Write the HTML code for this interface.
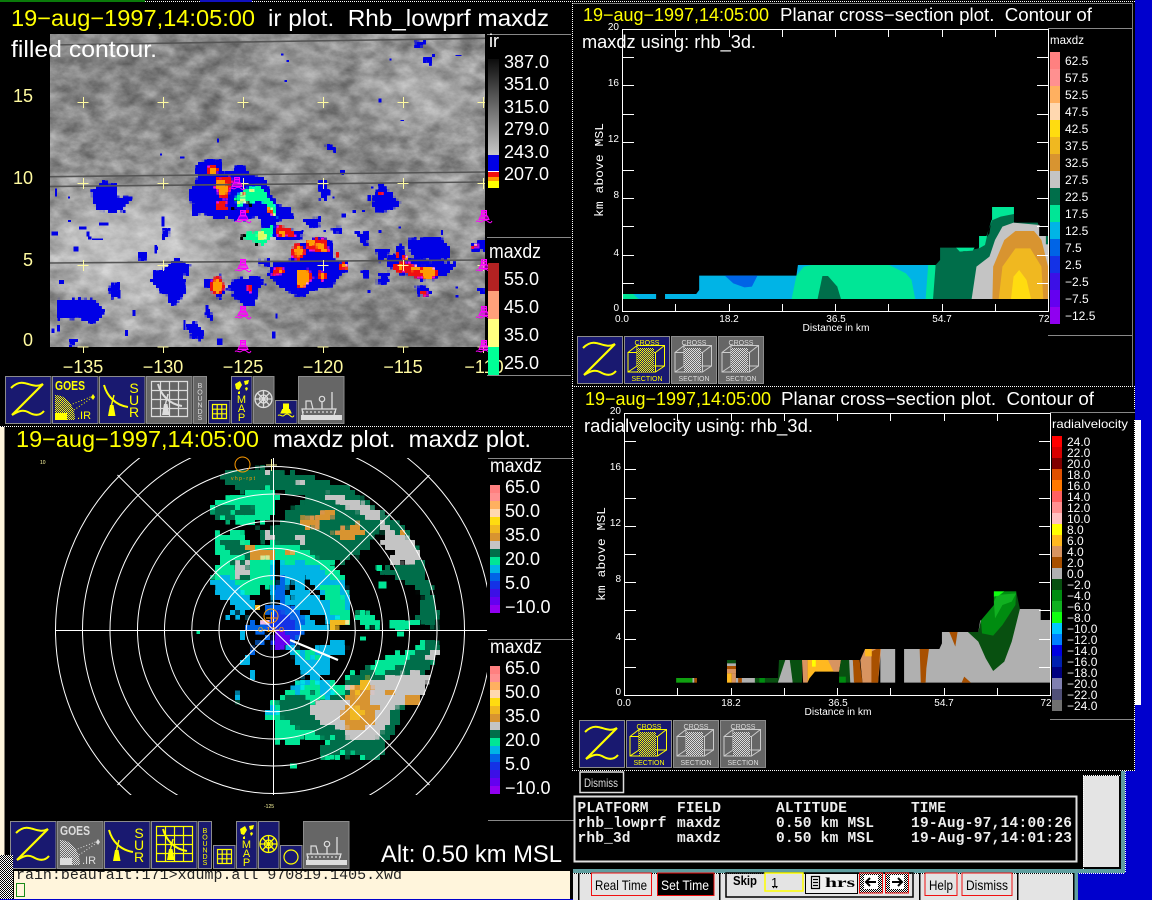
<!DOCTYPE html>
<html><head><meta charset="utf-8"><title>Radar display</title>
<style>
html,body{margin:0;padding:0;background:#000;width:1152px;height:900px;overflow:hidden}
svg{display:block;position:absolute;left:0;top:0}
text{font-family:"Liberation Sans",sans-serif}
.w{fill:#fff}.y{fill:#ffff00}.p{fill:#fffaa0}
.m,.m text{font-family:"Liberation Mono",monospace}
.dot{fill:none;stroke:#fff;stroke-width:1;stroke-dasharray:1 1;shape-rendering:crispEdges}
</style></head><body>
<svg width="1152" height="900" viewBox="0 0 1152 900" xmlns="http://www.w3.org/2000/svg">
<defs>
<pattern id="dy" width="2" height="2" patternUnits="userSpaceOnUse"><rect width="2" height="2" fill="#191970"/><rect width="1" height="1" fill="#ff0"/><rect x="1" y="1" width="1" height="1" fill="#ff0"/></pattern>
<pattern id="dw" width="2" height="2" patternUnits="userSpaceOnUse"><rect width="2" height="2" fill="#666"/><rect width="1" height="1" fill="#ddd"/><rect x="1" y="1" width="1" height="1" fill="#ddd"/></pattern>
<pattern id="dk" width="2" height="2" patternUnits="userSpaceOnUse"><rect width="2" height="2" fill="#fff"/><rect width="1" height="1" fill="#000"/><rect x="1" y="1" width="1" height="1" fill="#000"/></pattern>
<filter id="cloud" filterUnits="userSpaceOnUse" x="50" y="34" width="435" height="313" color-interpolation-filters="sRGB">
<feTurbulence type="fractalNoise" baseFrequency="0.05 0.075" numOctaves="5" seed="7"/>
<feColorMatrix values="0.5 0 0 0 0.31  0.5 0 0 0 0.31  0.5 0 0 0 0.31  0 0 0 0 1"/>
</filter>
<filter id="bl" filterUnits="userSpaceOnUse" x="0" y="0" width="1152" height="900"><feGaussianBlur stdDeviation="16"/></filter>
<filter id="rgh" filterUnits="userSpaceOnUse" x="0" y="0" width="600" height="420" color-interpolation-filters="sRGB">
<feTurbulence type="fractalNoise" baseFrequency="0.14" numOctaves="2" seed="3" result="n"/>
<feDisplacementMap in="SourceGraphic" in2="n" scale="8" xChannelSelector="R" yChannelSelector="G"/>
</filter>
<filter id="rgs" filterUnits="userSpaceOnUse" x="0" y="0" width="600" height="420" color-interpolation-filters="sRGB">
<feTurbulence type="fractalNoise" baseFrequency="0.2" numOctaves="2" seed="11" result="n"/>
<feDisplacementMap in="SourceGraphic" in2="n" scale="4" xChannelSelector="R" yChannelSelector="G"/>
</filter>
<filter id="rp" filterUnits="userSpaceOnUse" x="0" y="420" width="600" height="400" color-interpolation-filters="sRGB">
<feTurbulence type="fractalNoise" baseFrequency="0.11" numOctaves="2" seed="5" result="n"/>
<feDisplacementMap in="SourceGraphic" in2="n" scale="10" xChannelSelector="R" yChannelSelector="G"/>
</filter>
<filter id="px5" filterUnits="userSpaceOnUse" primitiveUnits="userSpaceOnUse" x="0" y="420" width="600" height="400" color-interpolation-filters="sRGB">
<feFlood x="2" y="422" width="1" height="1" flood-color="#000"/>
<feComposite width="5" height="5"/>
<feTile result="a"/>
<feComposite in="SourceGraphic" in2="a" operator="in"/>
<feMorphology operator="dilate" radius="2"/>
</filter>
<filter id="px3" filterUnits="userSpaceOnUse" primitiveUnits="userSpaceOnUse" x="0" y="0" width="600" height="420" color-interpolation-filters="sRGB">
<feFlood x="1" y="1" width="1" height="1" flood-color="#000"/>
<feComposite width="3" height="3"/>
<feTile result="a"/>
<feComposite in="SourceGraphic" in2="a" operator="in"/>
<feMorphology operator="dilate" radius="1"/>
</filter>
<clipPath id="mapc"><rect x="50" y="34" width="435" height="313"/></clipPath>
<clipPath id="polc"><rect x="55" y="458" width="432" height="337"/></clipPath>
<clipPath id="termc"><rect x="14" y="871" width="556" height="28"/></clipPath>
<g id="zz" fill="none" stroke="#ff0" stroke-width="2"><path d="M6 12C10 8 14 6 19 7C25 8 31 12 38 8"/><path d="M38 8L7 39" stroke-width="2.200"/><path d="M7 39C12 36 17 33 23 36C28 39 34 41 39 35"/></g>
<g id="dish" fill="none" stroke="currentColor"><path d="M5 9C8 20 16 29 29 31" stroke-width="2"/><path d="M15 19L12.500 29" stroke-width="1.500"/><path d="M11 29H14.500L16.500 40H9Z" fill="currentColor" stroke="none"/></g>
<g id="grid4" fill="none" stroke="currentColor" stroke-width="1"><path d="M5.500 5.500H41.500V40.500H5.500ZM14.500 5.500V40.500M23.500 5.500V40.500M32.500 5.500V40.500M5.500 14.500H41.500M5.500 23.500H41.500M5.500 32.500H41.500" stroke-width="1.200"/></g>
<g id="sg" fill="none" stroke="currentColor" stroke-width="1.200"><path d="M4.500 6.500H18.500V20.500H4.500ZM9.200 6.500V20.500M13.800 6.500V20.500M4.500 11.200H18.500M4.500 15.800H18.500"/></g>
<g id="wheel" fill="none" stroke="currentColor" stroke-width="1.300"><circle cx="10.500" cy="23" r="8.500"/><circle cx="10.500" cy="23" r="4"/><path d="M10.500 14.500V31.500M2 23H19M4.500 17L16.500 29M16.500 17L4.500 29"/></g>
<g id="ship" fill="none" stroke="#ddd" stroke-width="1.200"><rect x="3" y="39" width="41" height="5" fill="#ddd" stroke="none"/><path d="M5 39L4 33L38 33L36 39"/><path d="M4 36H38" stroke-dasharray="2 2"/><path d="M8 33V25H13L15 33"/><circle cx="24" cy="23" r="2.700"/><path d="M24 26V33M34 16V33" stroke-width="1.300"/></g>
<g id="mapi" fill="#ff0"><path d="M4 8L9 5L11 9L8 14L5 13ZM13 5L18 4L17 8L14 9ZM14 12L16 11L17 13L15 15ZM7 16L9 15L9 18L7 18Z"/></g>
<g id="cube" fill="none" stroke="currentColor" stroke-width="1"><path d="M4 16.500H31.500V36H4ZM13 9.500H40.500V30H13ZM4 16.500L13 9.500M31.500 16.500L40.500 9.500M31.500 36L40.500 30M4 36L13 30"/></g>
<g id="buoy" fill="none" stroke="#ff00ff" stroke-width="1"><path d="M-2.500 -8.500H2.500V-3.500H-2.500ZM-2.500 -6.500H2.500M-3.500 -3L3.500 -3L5 0.500H-5Z" fill="#ff00ff" fill-opacity=".55"/><path d="M-8 2.500C-6 0.500 -4 4 -2 2.500S2 0.500 4 2.500S7 4 8 2"/></g>
<g id="tf" stroke="#fff" stroke-width="1" fill="none" shape-rendering="crispEdges">
<path d="M622.500 29.500H1048.500V311.500H622.500Z"/>
<path d="M622 57.500H634M622 85.500H634M622 114.500H634M622 142.500H634M622 170.500H634M622 198.500H634M622 226.500H634M622 255.500H634M622 283.500H634"/>
<path d="M1037 57.500H1048M1037 85.500H1048M1037 114.500H1048M1037 142.500H1048M1037 170.500H1048M1037 198.500H1048M1037 226.500H1048M1037 255.500H1048M1037 283.500H1048"/>
<path d="M675.500 29V37M729.500 29V37M782.500 29V37M835.500 29V37M888.500 29V37M942.500 29V37M995.500 29V37"/>
<path d="M675.500 304V312M729.500 304V312M782.500 304V312M835.500 304V312M888.500 304V312M942.500 304V312M995.500 304V312"/>
</g>
</defs>

<!-- desktop -->
<rect width="1152" height="900" fill="#000"/>
<rect x="1135" y="0" width="17" height="775" fill="#0000cd"/>
<rect x="1125" y="771" width="27" height="102" fill="#0000cd"/>
<rect x="1078" y="873" width="74" height="27" fill="#0000cd"/>
<rect x="1135" y="420" width="6" height="285" fill="#fff"/>

<!-- top edge colours -->
<rect x="0" y="0" width="145" height="2" fill="#0a7a0a"/>
<rect x="200" y="0" width="52" height="2" fill="#1010c0"/>
<path class="dot" d="M145 1.500H200M252 1.500H1135M0 426.500H572"/>

<!-- left cream strip -->
<rect x="0" y="427" width="4.500" height="428" fill="#fff5dc"/>

<!-- ============ IR map ============ -->
<g clip-path="url(#mapc)">
<rect x="50" y="34" width="435" height="313" filter="url(#cloud)"/>
<g filter="url(#bl)">
<rect x="50" y="34" width="300" height="90" fill="#000" opacity=".08"/>
<ellipse cx="130" cy="250" rx="85" ry="55" fill="#fff" opacity=".42"/>
<ellipse cx="170" cy="330" rx="120" ry="22" fill="#fff" opacity=".18"/>
<ellipse cx="290" cy="75" rx="25" ry="45" fill="#fff" opacity=".2"/>
<ellipse cx="420" cy="90" rx="60" ry="40" fill="#fff" opacity=".22"/>
<ellipse cx="300" cy="245" rx="70" ry="25" fill="#fff" opacity=".28"/>
<ellipse cx="400" cy="330" rx="100" ry="25" fill="#000" opacity=".12"/>
<ellipse cx="360" cy="140" rx="45" ry="35" fill="#000" opacity=".08"/>
<ellipse cx="450" cy="210" rx="30" ry="20" fill="#fff" opacity=".28"/>
</g>
<g filter="url(#px3)">
<g filter="url(#rgh)"><g transform="scale(.36738 .33333)" fill="#0000e6">
<path d="M530 490L600 475L610 520L660 490L680 525L720 530L725 560L750 610L790 625L800 655L760 660L740 680L800 690L830 700L810 720L750 720L700 650L650 660L590 655L550 640L520 650L525 610L510 580L535 550Z"/>
<path d="M250 570L280 545L320 555L325 590L360 590L340 630L310 640L260 630L250 600Z"/>
<path d="M1015 600L1030 550L1050 560L1075 590L1090 610L1050 640L1010 630Z"/>
<path d="M1110 720L1190 710L1225 740L1225 775L1130 780L1110 750Z"/>
<path d="M1060 770L1090 735L1110 775L1240 790L1220 830L1150 840L1090 820L1060 800Z"/>
<path d="M1030 820L1055 815L1055 850L1030 850Z"/>
<path d="M800 740L850 715L900 720L905 780L950 790L950 810L930 830L900 860L810 890L760 860L725 820L745 790L790 775Z"/>
<path d="M420 820L480 780L520 795L500 830L505 880L470 915L440 880L415 840Z"/>
<path d="M565 840L600 830L610 875L600 900L570 870L555 855Z"/>
<path d="M630 840L700 825L715 840L690 915L650 905L622 870Z"/>
<path d="M155 900L260 895L285 940L250 975L210 950L160 960L150 930Z"/>
<path d="M505 970L535 965L555 1000L550 1020L520 1010Z"/>
<path d="M815 655L870 655L875 675L840 680Z"/>
<path d="M970 700L1005 695L1005 735L985 735Z"/>
<path d="M1280 730L1320 712L1320 755L1290 755Z"/>
<path d="M1130 125L1160 118L1150 145L1130 145Z"/>
<path d="M1155 175L1185 160L1175 190L1155 190Z"/>
<path d="M885 440L910 435L915 458L900 455Z"/>
<path d="M1130 860L1170 860L1170 890L1140 890Z"/>
<path d="M190 1020L210 1020L205 1040L190 1040Z"/>
<path d="M1020 750L1060 745L1060 770L1030 780Z"/>
<path d="M700 775L740 775L735 800L705 795Z"/>
<path d="M380 760L400 760L395 785L380 785Z"/>
<path d="M905 685L935 685L935 700L910 700Z"/>
<path d="M985 810L1005 805L1005 830L990 830Z"/>
<path d="M1300 860L1320 860L1320 880L1305 880Z"/>
<path d="M300 850L325 845L325 895L305 895Z"/>
<path d="M440 690L460 690L458 720L445 720Z"/>
<path d="M565 925L585 955L575 965L560 940Z"/>
<path d="M870 540L890 540L890 600L870 600Z"/>
</g></g>
<g filter="url(#rgs)"><g transform="translate(180 150) scale(.33333)">
<g fill="#f01010">
<ellipse cx="98" cy="60" rx="20" ry="15"/><path d="M105 85L155 78L155 110L140 150L115 140L105 110Z"/><rect x="108" y="155" width="32" height="25"/>
<ellipse cx="355" cy="305" rx="20" ry="24"/><path d="M380 275L395 265L440 265L445 305L400 305L378 298Z"/><path d="M350 365L385 355L400 385L375 410L350 415Z"/>
<ellipse cx="425" cy="377" rx="16" ry="13"/><ellipse cx="112" cy="408" rx="21" ry="27"/><path d="M275 360L310 348L315 372L275 375Z"/>
<rect x="202" y="405" width="15" height="22"/><path d="M290 225L345 240L345 258L295 262Z"/><path d="M475 340L490 335L508 355L480 358Z"/><ellipse cx="471" cy="316" rx="7" ry="7"/>
<path d="M640 345L670 330L700 345L690 365L645 365Z"/><path d="M685 358L730 345L775 360L775 380L735 388L685 375Z"/><path d="M648 305L660 305L660 320L648 320Z"/><path d="M668 320L685 316L685 330L668 330Z"/><path d="M720 420L745 425L745 440L725 437Z"/><path d="M878 285L895 282L895 295L880 295Z"/><rect x="597" y="125" width="10" height="10"/>
<path d="M260 165L285 170L290 205L265 190Z"/>
</g>
<g fill="#ff9c00">
<rect x="92" y="55" width="16" height="16"/><path d="M110 90L135 90L143 120L132 140L112 125Z"/><ellipse cx="355" cy="304" rx="12" ry="15"/><ellipse cx="394" cy="278" rx="9" ry="9"/><path d="M408 282L430 282L438 305L415 298Z"/><ellipse cx="369" cy="385" rx="19" ry="24"/><ellipse cx="427" cy="377" rx="8" ry="7"/><ellipse cx="112" cy="408" rx="15" ry="19"/><rect x="300" y="240" width="14" height="20"/><rect x="295" y="358" width="10" height="10"/><ellipse cx="705" cy="355" rx="11" ry="9"/><ellipse cx="745" cy="367" rx="20" ry="18"/><rect x="655" y="345" width="12" height="12"/><rect x="672" y="318" width="12" height="10"/><rect x="488" y="345" width="12" height="8"/><rect x="262" y="170" width="20" height="14"/><rect x="277" y="182" width="12" height="18"/><rect x="883" y="284" width="10" height="8"/>
</g>
<g fill="#00ff96">
<path d="M190 115L240 110L265 135L290 180L290 205L275 180L245 155L200 155L178 170L160 150Z"/>
<path d="M195 268L200 250L245 240L285 225L270 262L250 285L220 272Z"/>
</g>
<g fill="#d8ff60"><ellipse cx="245" cy="258" rx="13" ry="12"/><rect x="170" y="150" width="32" height="10"/><rect x="210" y="120" width="12" height="6"/></g>
<g fill="#000"><rect x="152" y="172" width="14" height="10"/><rect x="185" y="255" width="12" height="10"/><rect x="222" y="280" width="10" height="8"/><rect x="165" y="148" width="12" height="8"/><rect x="202" y="155" width="12" height="14"/></g>
<g fill="#f01010"><rect x="182" y="125" width="12" height="14"/><rect x="193" y="178" width="10" height="12"/></g>
</g></g>
</g>
<g transform="scale(.36738 .33333)" fill="#0000e6" shape-rendering="crispEdges">
<rect x="185" y="660" width="8" height="6"/><rect x="270" y="668" width="25" height="9"/><rect x="140" y="695" width="18" height="12"/><rect x="200" y="740" width="14" height="14"/><rect x="240" y="710" width="9" height="9"/><rect x="160" y="840" width="14" height="12"/><rect x="340" y="990" width="9" height="18"/><rect x="360" y="930" width="9" height="18"/><rect x="1030" y="295" width="8" height="12"/><rect x="765" y="160" width="7" height="7"/><rect x="1060" y="175" width="6" height="6"/><rect x="1090" y="360" width="10" height="3"/><rect x="590" y="415" width="6" height="12"/><rect x="435" y="460" width="6" height="6"/><rect x="490" y="470" width="12" height="6"/><rect x="1000" y="870" width="9" height="9"/><rect x="1240" y="885" width="8" height="8"/><rect x="960" y="630" width="9" height="9"/><rect x="1200" y="690" width="6" height="15"/><rect x="1030" y="690" width="9" height="9"/><rect x="1240" y="165" width="16" height="3"/><rect x="775" y="240" width="6" height="6"/><rect x="420" y="740" width="10" height="10"/><rect x="240" y="940" width="6" height="30"/><rect x="720" y="850" width="6" height="6"/><rect x="925" y="510" width="14" height="10"/><rect x="930" y="640" width="12" height="12"/><rect x="905" y="590" width="6" height="6"/><rect x="780" y="180" width="6" height="6"/>
<rect x="150" y="565" width="5" height="25"/><rect x="215" y="680" width="20" height="8"/><rect x="235" y="695" width="8" height="15"/><rect x="250" y="715" width="30" height="5"/><rect x="440" y="650" width="8" height="30"/><rect x="420" y="735" width="8" height="25"/><rect x="335" y="590" width="25" height="8"/><rect x="185" y="590" width="6" height="6"/><rect x="320" y="870" width="8" height="25"/><rect x="560" y="915" width="8" height="25"/><rect x="500" y="960" width="5" height="30"/><rect x="590" y="1015" width="15" height="20"/><rect x="740" y="995" width="10" height="20"/><rect x="750" y="940" width="6" height="15"/><rect x="155" y="975" width="8" height="20"/><rect x="140" y="985" width="8" height="14"/><rect x="1050" y="830" width="6" height="8"/><rect x="1240" y="860" width="6" height="6"/><rect x="1010" y="560" width="6" height="6"/><rect x="1000" y="585" width="10" height="18"/><rect x="890" y="570" width="10" height="16"/><rect x="985" y="630" width="8" height="6"/><rect x="1085" y="680" width="6" height="6"/><rect x="930" y="515" width="6" height="10"/><rect x="820" y="690" width="6" height="6"/><rect x="880" y="690" width="8" height="6"/><rect x="910" y="880" width="0" height="0"/><rect x="1070" y="760" width="6" height="14"/><rect x="1320" y="770" width="6" height="6"/>
</g>
<path d="M50 45L485 38.300M50 176.700L485 172M50 186.500L485 182M50 263L485 260" stroke="#555" stroke-width="1.600" fill="none"/>
<g stroke="#fffaa0" stroke-width="1" fill="none" shape-rendering="crispEdges">
<path d="M77.500 102.500H88.500M83.500 97V108M157.500 102.500H168.500M163.500 97V108M237.500 102.500H248.500M243.500 97V108M317.500 102.500H328.500M323.500 97V108M397.500 102.500H408.500M403.500 97V108M477.500 102.500H488.500M483.500 97V108"/>
<path d="M77.500 183.500H88.500M83.500 178V189M157.500 183.500H168.500M163.500 178V189M237.500 183.500H248.500M243.500 178V189M317.500 183.500H328.500M323.500 178V189M397.500 183.500H408.500M403.500 178V189M477.500 183.500H488.500M483.500 178V189"/>
<path d="M77.500 265.500H88.500M83.500 260V271M157.500 265.500H168.500M163.500 260V271M317.500 265.500H328.500M323.500 260V271M397.500 265.500H408.500M403.500 260V271M477.500 265.500H488.500M483.500 260V271"/>
</g>
</g>
<g stroke="#fffaa0" stroke-width="1" fill="none" shape-rendering="crispEdges"><path d="M77.500 347H88.500M83.500 347V353M157.500 347H168.500M163.500 347V353M317.500 347H328.500M323.500 347V353M397.500 347H408.500M403.500 347V353M477.500 347H488.500M483.500 347V353"/></g>
<use href="#buoy" x="237" y="186"/><use href="#buoy" x="243" y="219"/><use href="#buoy" x="243" y="268"/><use href="#buoy" x="243" y="315"/><use href="#buoy" x="243" y="349"/><use href="#buoy" x="484" y="219"/><use href="#buoy" x="484" y="268"/><use href="#buoy" x="484" y="315"/><use href="#buoy" x="484" y="349"/>

<!-- IR labels -->
<text x="11" y="26" font-size="23" class="y" textLength="244" lengthAdjust="spacingAndGlyphs">19−aug−1997,14:05:00</text>
<text x="268" y="26" font-size="23" class="w" textLength="281" lengthAdjust="spacingAndGlyphs">ir plot.&#160;&#160;Rhb_lowprf maxdz</text>
<text x="11" y="57" font-size="23" class="w" textLength="146" lengthAdjust="spacingAndGlyphs">filled contour.</text>
<g font-size="18" class="p" text-anchor="end"><text x="33" y="102">15</text><text x="33" y="184">10</text><text x="33" y="266">5</text><text x="33" y="346">0</text></g>
<g font-size="18" class="p" text-anchor="middle"><text x="83" y="373">−135</text><text x="163" y="373">−130</text><text x="243" y="373">−125</text><text x="323" y="373">−120</text><text x="403" y="373">−115</text><text x="484" y="373">−110</text></g>
<path d="M487 34.500H571M487 237.500H571M487 375.500H571" stroke="#888" stroke-width="1" shape-rendering="crispEdges"/>
<text x="489" y="47" font-size="18" class="w">ir</text>
<linearGradient id="gg" x1="0" y1="0" x2="0" y2="1"><stop offset="0" stop-color="#0c0c0c"/><stop offset="1" stop-color="#c8c8c8"/></linearGradient>
<rect x="488" y="59" width="11" height="96" fill="url(#gg)"/>
<rect x="488" y="155" width="11" height="16" fill="#0000e6"/><rect x="488" y="171" width="11" height="1" fill="#fff"/><rect x="488" y="172" width="11" height="5" fill="#f01010"/><rect x="488" y="177" width="11" height="4" fill="#ff9c00"/><rect x="488" y="181" width="11" height="7" fill="#ffff00"/>
<g font-size="18" class="w"><text x="504" y="68">387.0</text><text x="504" y="90">351.0</text><text x="504" y="113">315.0</text><text x="504" y="135">279.0</text><text x="504" y="158">243.0</text><text x="504" y="180">207.0</text></g>
<text x="489" y="258" font-size="20" class="w" textLength="52" lengthAdjust="spacingAndGlyphs">maxdz</text>
<rect x="488" y="263" width="11" height="28" fill="#b22222"/><rect x="488" y="291" width="11" height="28" fill="#ffa07a"/><rect x="488" y="319" width="11" height="28" fill="#ffff80"/><rect x="488" y="347" width="11" height="28" fill="#00ff96"/>
<g font-size="18" class="w"><text x="504" y="285">55.0</text><text x="504" y="313">45.0</text><text x="504" y="341">35.0</text><text x="504" y="369">25.0</text></g>

<!-- IR buttons -->
<g transform="translate(5 376)">
<rect x=".5" y=".5" width="45.500" height="47" fill="#191970" stroke="#8c8c8c"/><use href="#zz"/>
<g transform="translate(47 0)" color="#ff0"><rect x=".5" y=".5" width="45.500" height="47" fill="#191970" stroke="#8c8c8c"/><text x="3" y="14" font-size="13" font-weight="bold" fill="#ff0" textLength="30" lengthAdjust="spacingAndGlyphs">GOES</text><path d="M3 19C14 19 23 29 23 44H3Z" fill="url(#dy)"/><rect x="3" y="37" width="12" height="7" fill="#ff0"/><path d="M18 29L41 20" stroke="#ff0" stroke-dasharray="1 2"/><path d="M22 34L41 21" stroke="#ff0" stroke-dasharray="1 2"/><path d="M41 18L43 21L41 24L39 21Z" fill="#ff0"/><text x="25" y="43" font-size="11" fill="#ff0">.IR</text></g>
<g transform="translate(94 0)" color="#ff0"><rect x=".5" y=".5" width="45.500" height="47" fill="#191970" stroke="#8c8c8c"/><use href="#dish"/><g font-size="14" fill="#ff0" text-anchor="middle"><text x="35" y="17">S</text><text x="35" y="29">U</text><text x="35" y="41">R</text></g></g>
<g transform="translate(141 0)" color="#ddd"><rect x=".5" y=".5" width="45.500" height="47" fill="#666" stroke="#8c8c8c"/><use href="#grid4"/><use href="#dish" x="7" y="-1"/></g>
<g transform="translate(188 0)"><rect x=".5" y=".5" width="13" height="47" fill="#666" stroke="#8c8c8c"/><g font-size="7" fill="#ddd" text-anchor="middle"><text x="7" y="12">B</text><text x="7" y="18.500">O</text><text x="7" y="25">U</text><text x="7" y="31.500">N</text><text x="7" y="38">D</text><text x="7" y="44">S</text></g></g>
<g transform="translate(203 24)" color="#ff0"><rect x=".5" y=".5" width="21.500" height="23" fill="#191970" stroke="#8c8c8c"/><use href="#sg" y="-2"/></g>
<g transform="translate(226 0)"><rect x=".5" y=".5" width="20.500" height="47" fill="#191970" stroke="#8c8c8c"/><use href="#mapi"/><g font-size="11" fill="#ff0" text-anchor="middle"><text x="10.500" y="27">M</text><text x="10.500" y="36">A</text><text x="10.500" y="45">P</text></g></g>
<g transform="translate(248 0)" color="#ddd"><rect x=".5" y=".5" width="20.500" height="47" fill="#666" stroke="#8c8c8c"/><use href="#wheel"/></g>
<g transform="translate(270 24)"><rect x=".5" y=".5" width="21.500" height="23" fill="#191970" stroke="#8c8c8c"/><g transform="translate(11 12.500)" fill="none" stroke="#ff0"><path d="M-2.500 -8.500H2.500V-3.500H-2.500ZM-3.500 -3H3.500L5 .5H-5Z" fill="#ff0"/><path d="M-8 3C-6 1 -4 5 -2 3S2 1 4 3S7 5 8 3"/></g></g>
<g transform="translate(293 0)"><rect x=".5" y=".5" width="45.500" height="47" fill="#666" stroke="#8c8c8c"/><use href="#ship"/></g>
</g>

<!-- ============ polar ============ -->
<g clip-path="url(#polc)">
<g filter="url(#px5)">
<g filter="url(#rp)"><g transform="translate(0 430) scale(.36738 .33333)">
<g fill="#00e696">
<path d="M575 215L640 195L730 170L760 200L730 280L590 272Z"/>
<path d="M580 320L640 300L700 340L800 330L860 340L900 400L930 430L950 500L960 590L870 590L830 530L760 450L700 490L640 510L590 470L575 450L600 410Z"/>
<path d="M710 860L760 800L820 750L890 740L930 770L940 740L1020 700L1190 620L1190 680L1130 780L1070 900L1040 980L880 985L870 960L910 940L820 925L760 940L745 870Z"/>
<path d="M970 540L1020 560L1025 590L975 590Z"/>
<path d="M1065 570L1140 570L1140 585L1075 600Z"/>
<path d="M770 925L810 920L810 940L770 940Z"/>
</g>
<g fill="#006e4a">
<path d="M600 130L700 110L840 140L950 170L1040 240L1110 310L1150 380L1170 470L1190 520L1190 595L1130 570L1150 500L1130 470L1040 430L1030 410L1120 410L1080 330L1030 310L980 370L940 400L860 380L800 350L720 330L700 300L760 290L780 250L840 200L760 180L720 170L680 190L620 170Z"/>
<path d="M590 230L635 225L640 265L585 265Z"/><path d="M645 230L690 225L695 260L650 260Z"/><path d="M600 330L650 325L660 345L700 350L670 385L610 360Z"/><path d="M625 400L650 385L690 400L680 450L640 450Z"/>
<path d="M750 810L800 790L850 810L940 790L950 740L1010 710L1030 740L1090 700L1130 660L1190 630L1190 680L1140 760L1070 920L1030 980L940 965L880 980L870 960L910 930L830 900L770 870Z"/>
<path d="M820 765L860 755L870 790L815 790Z"/><path d="M1165 620L1190 625L1185 690L1130 680Z"/>
<path d="M640 800L655 800L655 820L640 820Z"/>
<path d="M870 450L930 460L925 510L875 500Z"/>
</g>
<g fill="#c4c4c4">
<path d="M870 180L930 205L1040 240L1040 280L1120 330L1145 385L1100 400L1075 375L1040 330L1040 280L980 250L920 220L875 200Z"/>
<rect x="810" y="145" width="25" height="22"/><rect x="720" y="110" width="15" height="25"/><rect x="720" y="305" width="35" height="20"/><path d="M640 400L680 395L675 445L640 440Z"/><rect x="1070" y="375" width="25" height="25"/><rect x="800" y="315" width="22" height="18"/><rect x="1125" y="545" width="20" height="16"/>
<path d="M850 820L940 810L950 770L1050 740L1130 725L1170 735L1150 800L1080 830L1060 870L1030 920L980 935L930 905L850 860Z"/>
<rect x="1170" y="660" width="20" height="25"/>
</g>
<g fill="#d89430">
<path d="M815 265L870 260L870 290L840 295L815 280Z"/><rect x="875" y="245" width="45" height="23"/><path d="M905 305L985 280L985 315L930 330Z"/><path d="M680 365L745 360L745 385L690 390Z"/><rect x="665" y="340" width="30" height="20"/><rect x="775" y="362" width="25" height="16"/><rect x="1080" y="305" width="20" height="17"/>
<path d="M930 860L950 790L990 745L1020 770L1000 810L1030 830L1030 860L1000 895L950 895Z"/><rect x="1100" y="790" width="40" height="40"/><rect x="1050" y="780" width="25" height="20"/>
</g>
<g fill="#f0b820"><path d="M950 850L975 820L985 860L960 870Z"/><rect x="960" y="775" width="25" height="25"/><rect x="985" y="745" width="20" height="30"/><path d="M905 578L945 565L945 585L910 595Z"/></g>
<g fill="#00b4e6">
<path d="M745 825L760 840L760 850L715 850Z"/>
<path d="M790 770L850 740L890 745L900 770L900 800L830 790Z"/>
<rect x="610" y="740" width="10" height="15"/><rect x="640" y="785" width="14" height="15"/><rect x="675" y="725" width="14" height="18"/>
<path d="M650 700L690 670L690 680L660 710Z"/>
</g>
<path d="M825 760L860 750L870 790L820 790Z" fill="#00e696"/>
<path d="M835 775L860 770L860 790L835 790Z" fill="#006e4a"/>
</g>
<!-- centre of the polar plot, drawn in 3x real coords -->
<g transform="translate(190 540) scale(.33333)">
<path fill="#00b4e6" d="M60 120L110 100L190 190L170 235L150 210L110 240L130 200L90 170Z"/>
<path fill="#00b4e6" d="M245 60L300 70L340 60L420 110L470 130L480 220L440 230L410 270L340 270L310 200L250 190Z"/>
<path fill="#00e696" d="M395 135L450 130L470 220L430 225L410 170Z"/>
<path fill="#00b4e6" d="M290 310L350 330L410 320L450 290L470 330L420 360L415 400L340 410L310 360Z"/>
<path fill="#00e696" d="M315 340L380 360L395 340L340 335Z"/>
<path fill="#0064e6" d="M250 190L300 200L350 240L320 310L270 320L200 290L160 270L190 230Z"/>
<path fill="#0064e6" d="M265 110L285 110L285 190L265 190Z"/>
<path fill="#1432e6" d="M250 210L300 220L325 280L280 320L250 320L230 280Z"/>
<path fill="#6400f0" d="M255 270L300 265L300 320L255 320Z"/>
<g fill="#000">
<path d="M160 275L250 275L250 345L200 345L170 310Z"/><path d="M175 215L225 205L235 250L190 250Z"/>
<path d="M345 115L410 175L395 180L335 130Z"/><path d="M290 125L310 125L305 190L292 190Z"/><path d="M330 200L420 250L410 260L325 215Z"/>
<path d="M255 60L265 60L265 190L255 190Z"/>
</g>
<g fill="#0064e6"><rect x="200" y="300" width="15" height="15"/><rect x="225" y="295" width="15" height="15"/><rect x="175" y="325" width="14" height="14"/></g>
<g fill="#00b4e6"><rect x="120" y="215" width="20" height="15"/><rect x="156" y="282" width="12" height="24"/></g>
<g fill="#f0b820"><rect x="190" y="196" width="24" height="12"/><rect x="212" y="244" width="24" height="12"/></g>
</g>
</g>
</g>
<g transform="translate(0 430) scale(.36738 .33333)" shape-rendering="crispEdges">
<g fill="#00e696"><rect x="1025" y="405" width="15" height="18"/><rect x="1030" y="455" width="22" height="20"/><rect x="1080" y="605" width="20" height="15"/><rect x="1060" y="570" width="15" height="25"/><rect x="790" y="1000" width="18" height="15"/><rect x="535" y="600" width="10" height="12"/><rect x="980" y="620" width="16" height="12"/></g>
</g>
<g fill="none" stroke="#fff" stroke-width="1">
<circle cx="273.500" cy="630" r="27.200"/><circle cx="273.500" cy="630" r="54.500"/><circle cx="273.500" cy="630" r="81.700"/><circle cx="273.500" cy="630" r="109"/><circle cx="273.500" cy="630" r="136"/><circle cx="273.500" cy="630" r="163.500"/><circle cx="273.500" cy="630" r="191"/><circle cx="273.500" cy="630" r="218"/>
<path d="M55 630.500H487M273.500 458V795"/>
<path d="M117.500 475L429.500 785M429.500 475L117.500 785"/>
</g>
<path d="M290 640L338 660" stroke="#fff" stroke-width="2.200"/>
</g>
<g fill="none" stroke="#ff9c00"><circle cx="242.500" cy="464.500" r="7.500"/><circle cx="271" cy="616" r="7"/><path d="M266 618H277M271.500 612V623"/></g>
<path d="M271.500 459V471M266 465H277" stroke="#fffaa0" fill="none"/>
<text x="231" y="480" font-size="5" fill="#ff9c00" textLength="24">vhp-rpt</text>
<text x="258" y="632" font-size="7" fill="#ff9c00" textLength="26" lengthAdjust="spacingAndGlyphs">0-12-0</text>
<text x="40" y="464" font-size="5" class="p">10</text><text x="264" y="808" font-size="5" class="p">-125</text>

<text x="16" y="447" font-size="23" class="y" textLength="243" lengthAdjust="spacingAndGlyphs">19−aug−1997,14:05:00</text>
<text x="273" y="447" font-size="23" class="w" textLength="258" lengthAdjust="spacingAndGlyphs">maxdz plot.&#160;&#160;maxdz plot.</text>
<text x="381" y="862" font-size="24" class="w" textLength="181" lengthAdjust="spacingAndGlyphs">Alt: 0.50 km MSL</text>
<path d="M488 458.500H574M488 639.500H574M488 820.500H574" stroke="#888" shape-rendering="crispEdges"/>

<g shape-rendering="crispEdges">
<g id="pl1"><rect x="490" y="485" width="10" height="8" fill="#ff8080"/><rect x="490" y="493" width="10" height="8" fill="#ff9090"/><rect x="490" y="501" width="10" height="8" fill="#ffb060"/><rect x="490" y="509" width="10" height="8" fill="#ffd8b0"/><rect x="490" y="517" width="10" height="8" fill="#ffdc10"/><rect x="490" y="525" width="10" height="8" fill="#f0b820"/><rect x="490" y="533" width="10" height="8" fill="#d89430"/><rect x="490" y="541" width="10" height="8" fill="#c4c4c4"/><rect x="490" y="549" width="10" height="8" fill="#006e4a"/><rect x="490" y="557" width="10" height="8" fill="#00e696"/><rect x="490" y="565" width="10" height="8" fill="#00b4e6"/><rect x="490" y="573" width="10" height="8" fill="#0064e6"/><rect x="490" y="581" width="10" height="8" fill="#1432e6"/><rect x="490" y="589" width="10" height="8" fill="#3c10e6"/><rect x="490" y="597" width="10" height="8" fill="#6400f0"/><rect x="490" y="605" width="10" height="8" fill="#9000f0"/></g>
<use href="#pl1" y="181"/>
</g>
<text x="490" y="472" font-size="19" class="w" textLength="52" lengthAdjust="spacingAndGlyphs">maxdz</text>
<g font-size="18" class="w"><text x="505" y="493">65.0</text><text x="505" y="517">50.0</text><text x="505" y="541">35.0</text><text x="505" y="565">20.0</text><text x="505" y="589">5.0</text><text x="505" y="613">−10.0</text></g>
<text x="490" y="653" font-size="19" class="w" textLength="52" lengthAdjust="spacingAndGlyphs">maxdz</text>
<g font-size="18" class="w"><text x="505" y="674">65.0</text><text x="505" y="698">50.0</text><text x="505" y="722">35.0</text><text x="505" y="746">20.0</text><text x="505" y="770">5.0</text><text x="505" y="794">−10.0</text></g>

<!-- polar buttons -->
<g transform="translate(10 821)">
<rect x=".5" y=".5" width="45.500" height="47" fill="#191970" stroke="#8c8c8c"/><use href="#zz"/>
<g transform="translate(47 0)"><rect x=".5" y=".5" width="45.500" height="47" fill="#666" stroke="#8c8c8c"/><text x="3" y="14" font-size="13" font-weight="bold" fill="#ddd" textLength="30" lengthAdjust="spacingAndGlyphs">GOES</text><path d="M3 19C14 19 23 29 23 44H3Z" fill="url(#dw)"/><rect x="3" y="37" width="12" height="7" fill="#ddd"/><path d="M18 29L41 20M22 34L41 21" stroke="#ddd" stroke-dasharray="1 2"/><path d="M41 18L43 21L41 24L39 21Z" fill="#ddd"/><text x="25" y="43" font-size="11" fill="#ddd">.IR</text></g>
<g transform="translate(94 0)" color="#ff0"><rect x=".5" y=".5" width="45.500" height="47" fill="#191970" stroke="#8c8c8c"/><use href="#dish"/><g font-size="14" fill="#ff0" text-anchor="middle"><text x="35" y="17">S</text><text x="35" y="29">U</text><text x="35" y="41">R</text></g></g>
<g transform="translate(141 0)" color="#ff0"><rect x=".5" y=".5" width="45.500" height="47" fill="#191970" stroke="#8c8c8c"/><use href="#grid4"/><use href="#dish" x="7" y="-1"/></g>
<g transform="translate(188 0)"><rect x=".5" y=".5" width="13" height="47" fill="#191970" stroke="#8c8c8c"/><g font-size="7" fill="#ff0" text-anchor="middle"><text x="7" y="12">B</text><text x="7" y="18.500">O</text><text x="7" y="25">U</text><text x="7" y="31.500">N</text><text x="7" y="38">D</text><text x="7" y="44">S</text></g></g>
<g transform="translate(203 24)" color="#ff0"><rect x=".5" y=".5" width="21.500" height="23" fill="#191970" stroke="#8c8c8c"/><use href="#sg" y="-2"/></g>
<g transform="translate(226 0)"><rect x=".5" y=".5" width="20.500" height="47" fill="#191970" stroke="#8c8c8c"/><use href="#mapi"/><g font-size="11" fill="#ff0" text-anchor="middle"><text x="10.500" y="27">M</text><text x="10.500" y="36">A</text><text x="10.500" y="45">P</text></g></g>
<g transform="translate(248 0)" color="#ff0"><rect x=".5" y=".5" width="20.500" height="47" fill="#191970" stroke="#8c8c8c"/><use href="#wheel"/></g>
<g transform="translate(270 24)"><rect x=".5" y=".5" width="21.500" height="23" fill="#191970" stroke="#8c8c8c"/><circle cx="11" cy="12" r="7" fill="none" stroke="#ff0" stroke-width="1.200"/></g>
<g transform="translate(293 0)"><rect x=".5" y=".5" width="45.500" height="47" fill="#666" stroke="#8c8c8c"/><use href="#ship"/></g>
</g>

<!-- terminal -->
<rect x="14" y="871" width="556" height="28" fill="#fff5dc"/>
<rect x="0" y="855" width="13" height="45" fill="url(#dk)"/>
<rect x="13" y="870" width="1" height="30" fill="#000"/>
<rect x="0" y="899" width="573" height="1" fill="#0000cd"/>
<g clip-path="url(#termc)"><text x="16" y="879" font-size="15" class="m" fill="#222" textLength="386" lengthAdjust="spacingAndGlyphs">rain:beaufait:171&gt;xdump.all 970819.1405.xwd</text></g>
<rect x="16.500" y="883.500" width="8" height="13" fill="none" stroke="#1a8a1a"/>

<!-- ============ cross section 1 ============ -->
<g transform="translate(570 0) scale(.37120 .33333)">
<path fill="#00b4e6" d="M142 882H232V897H142ZM256 882H340L348 870V827H610L614 795H985V897H256Z"/>
<path fill="#00e696" d="M142 882H170L185 897H142Z"/>
<path fill="#0064e6" d="M417 827H505L490 860L470 862L440 850Z"/>
<path fill="#00e696" d="M610 827L630 800L650 795H860L905 820L920 840L930 897H597ZM965 795H985V897H958Z"/>
<path fill="#006e4a" d="M680 828H695L720 860L730 897H667Z"/>
<path fill="#006e4a" d="M997 743H1040L1060 755L1100 745L1130 700L1135 660L1150 650L1196 640V668H1260L1288 760V897H978L985 795L997 780Z"/>
<path fill="#00e696" d="M1137 621H1196V642L1160 650L1135 662L1125 700L1118 735L1102 745V708H1122L1137 660ZM1040 743H1090L1085 752L1050 755Z"/>
<path fill="#c4c4c4" d="M1195 668L1265 675V708H1288V897H1082L1095 800L1130 770L1145 720L1165 680Z"/>
<rect x="1264" y="678" width="24" height="30" fill="#000"/>
<rect x="1282" y="708" width="6" height="25" fill="#006e4a"/>
<path fill="#d89430" d="M1138 897L1140 800L1170 720L1200 693H1250L1270 720L1288 800V897Z"/>
<path fill="#f0b820" d="M1155 897L1165 800L1200 745H1240L1270 800L1275 897Z"/>
<path fill="#ffdc10" d="M1188 897L1195 830L1210 810L1230 840L1242 897Z"/>
</g>
<use href="#tf"/>
<path class="dot" d="M572.500 3V386M572.500 3.500H1132.500V386M572 386.500H1132"/>
<path d="M1048 28.500H1132M1048 335.500H1132" stroke="#888" shape-rendering="crispEdges"/>
<text x="583" y="21" font-size="18" class="y" textLength="186" lengthAdjust="spacingAndGlyphs">19−aug−1997,14:05:00</text>
<text x="780" y="21" font-size="18" class="w" textLength="312" lengthAdjust="spacingAndGlyphs">Planar cross−section plot.&#160;&#160;Contour of</text>
<text x="582" y="48" font-size="18" class="w" textLength="174" lengthAdjust="spacingAndGlyphs">maxdz using: rhb_3d.</text>
<g font-size="10" class="w" text-anchor="end"><text x="619" y="30">20</text><text x="619" y="86">16</text><text x="619" y="142">12</text><text x="619" y="198">8</text><text x="619" y="256">4</text><text x="619" y="311">0</text></g>
<g font-size="10" class="w" text-anchor="middle"><text x="622" y="322">0.0</text><text x="729" y="322">18.2</text><text x="836" y="322">36.5</text><text x="942" y="322">54.7</text><text x="1044" y="322">72</text><text x="836" y="331" textLength="67" lengthAdjust="spacingAndGlyphs">Distance in km</text></g>
<text transform="translate(603 217) rotate(-90)" font-size="12" class="w m" textLength="94" lengthAdjust="spacingAndGlyphs">km above MSL</text>
<text x="1050" y="44" font-size="12" class="w" textLength="34" lengthAdjust="spacingAndGlyphs">maxdz</text>
<g shape-rendering="crispEdges"><rect x="1050" y="52" width="10" height="17" fill="#ff8080"/><rect x="1050" y="69" width="10" height="17" fill="#ff9090"/><rect x="1050" y="86" width="10" height="17" fill="#ffb060"/><rect x="1050" y="103" width="10" height="17" fill="#ffd8b0"/><rect x="1050" y="120" width="10" height="17" fill="#ffdc10"/><rect x="1050" y="137" width="10" height="17" fill="#f0b820"/><rect x="1050" y="154" width="10" height="17" fill="#d89430"/><rect x="1050" y="171" width="10" height="17" fill="#c4c4c4"/><rect x="1050" y="188" width="10" height="17" fill="#006e4a"/><rect x="1050" y="205" width="10" height="17" fill="#00e696"/><rect x="1050" y="222" width="10" height="17" fill="#00b4e6"/><rect x="1050" y="239" width="10" height="17" fill="#0064e6"/><rect x="1050" y="256" width="10" height="17" fill="#1432e6"/><rect x="1050" y="273" width="10" height="17" fill="#3c10e6"/><rect x="1050" y="290" width="10" height="17" fill="#6400f0"/><rect x="1050" y="307" width="10" height="17" fill="#9000f0"/></g>
<g font-size="12" class="w"><text x="1065" y="65">62.5</text><text x="1065" y="82">57.5</text><text x="1065" y="99">52.5</text><text x="1065" y="116">47.5</text><text x="1065" y="133">42.5</text><text x="1065" y="150">37.5</text><text x="1065" y="167">32.5</text><text x="1065" y="184">27.5</text><text x="1065" y="201">22.5</text><text x="1065" y="218">17.5</text><text x="1065" y="235">12.5</text><text x="1065" y="252">7.5</text><text x="1065" y="269">2.5</text><text x="1065" y="286">−2.5</text><text x="1065" y="303">−7.5</text><text x="1065" y="320">−12.5</text></g>
<g transform="translate(577 336)">
<rect x=".5" y=".5" width="45" height="47" fill="#191970" stroke="#8c8c8c"/><use href="#zz"/>
<g transform="translate(47 0)" color="#ff0"><rect x=".5" y=".5" width="45" height="47" fill="#191970" stroke="#8c8c8c"/><use href="#cube"/><rect x="13" y="12" width="17" height="24" fill="url(#dy)"/><text x="23" y="9" font-size="7" fill="#ff0" text-anchor="middle">CROSS</text><text x="23" y="45" font-size="7" fill="#ff0" text-anchor="middle">SECTION</text></g>
<g transform="translate(94 0)" color="#ccc"><rect x=".5" y=".5" width="45" height="47" fill="#666" stroke="#8c8c8c"/><use href="#cube"/><rect x="13" y="12" width="17" height="24" fill="url(#dw)"/><text x="23" y="9" font-size="7" fill="#ddd" text-anchor="middle">CROSS</text><text x="23" y="45" font-size="7" fill="#ddd" text-anchor="middle">SECTION</text></g>
<g transform="translate(141 0)" color="#ccc"><rect x=".5" y=".5" width="45" height="47" fill="#666" stroke="#8c8c8c"/><use href="#cube"/><rect x="13" y="12" width="17" height="24" fill="url(#dw)"/><text x="23" y="9" font-size="7" fill="#ddd" text-anchor="middle">CROSS</text><text x="23" y="45" font-size="7" fill="#ddd" text-anchor="middle">SECTION</text></g>
</g>

<!-- ============ cross section 2 ============ -->
<g transform="translate(570 385) scale(.37120 .33333)">
<path fill="#b0b0b0" d="M836 792H876V893H836ZM900 792H995L1002 775V741H1100L1105 706H1142L1203 672H1268V705H1295V893H900Z"/>
<path fill="#085010" d="M1072 741H1100L1107 706H1120L1142 660V619H1202L1212 672L1190 770L1170 830L1140 858L1120 820L1100 770Z"/>
<path fill="#008c10" d="M1107 706L1142 660V619H1202L1200 660L1165 720L1140 752L1110 745Z"/>
<path fill="#10b020" d="M1142 650L1150 630L1202 625L1190 650L1165 660L1145 700Z"/>
<path fill="#10ff10" d="M1142 619H1170L1155 632L1142 635Z"/>
<path fill="#a85000" d="M942 792H967L960 850L958 893H945ZM1022 741H1044L1038 785ZM1055 893L1062 875L1080 893Z"/>
<rect x="286" y="879" width="44" height="14" fill="#10a010"/><rect x="330" y="879" width="5" height="14" fill="#b0b0b0"/><rect x="335" y="879" width="7" height="14" fill="#a85000"/>
<rect x="423" y="825" width="24" height="10" fill="#085010"/><rect x="423" y="835" width="24" height="8" fill="#b0b0b0"/><rect x="423" y="843" width="24" height="22" fill="#a85000"/><rect x="423" y="852" width="24" height="13" fill="#d89460"/><rect x="423" y="865" width="13" height="28" fill="#ffb820"/><rect x="436" y="865" width="11" height="28" fill="#d89460"/>
<rect x="447" y="879" width="53" height="14" fill="#b0b0b0"/><rect x="453" y="879" width="10" height="14" fill="#a85000"/>
<rect x="498" y="879" width="62" height="14" fill="#085010"/><rect x="510" y="879" width="15" height="14" fill="#008c10"/>
<path fill="#085010" d="M563 825H580L565 893H560Z"/>
<path fill="#b0b0b0" d="M560 893L580 825H596L600 893Z"/>
<path fill="#085010" d="M592 825H625V893H600Z"/>
<path fill="#d89460" d="M625 825H640V893H628Z"/>
<path fill="#ffb820" d="M640 825H725V860H660L645 880L640 893Z"/>
<path fill="#ffff00" d="M652 825H662V845H652Z"/>
<path fill="#d89460" d="M695 825H730L725 860H710Z"/>
<path fill="#b0b0b0" d="M730 825H762L768 893H755Z"/>
<path fill="#085010" d="M725 860L730 825H752L755 893H725Z"/>
<rect x="725" y="875" width="18" height="18" fill="#008c10"/>
<path fill="#a85000" d="M762 825H780L788 893H765Z"/>
<path fill="#d89460" d="M782 825L795 792H838L830 893H788Z"/>
<path fill="#a85000" d="M812 800L825 792H836L830 893H812Z"/>
<rect x="795" y="792" width="18" height="22" fill="#ffb820"/>
</g>
<use href="#tf" x="2" y="384"/>
<path class="dot" d="M572.500 386V770.500M572 770.500H1134.500V420M1134.500 386V410M572 386.500H1134"/>
<path d="M1050 412.500H1135M1050 719.500H1135" stroke="#888" shape-rendering="crispEdges"/>
<text x="585" y="405" font-size="18" class="y" textLength="186" lengthAdjust="spacingAndGlyphs">19−aug−1997,14:05:00</text>
<text x="781" y="405" font-size="18" class="w" textLength="313" lengthAdjust="spacingAndGlyphs">Planar cross−section plot.&#160;&#160;Contour of</text>
<text x="584" y="432" font-size="18" class="w" textLength="229" lengthAdjust="spacingAndGlyphs">radialvelocity using: rhb_3d.</text>
<g font-size="10" class="w" text-anchor="end"><text x="621" y="414">20</text><text x="621" y="470">16</text><text x="621" y="526">12</text><text x="621" y="582">8</text><text x="621" y="640">4</text><text x="621" y="695">0</text></g>
<g font-size="10" class="w" text-anchor="middle"><text x="624" y="706">0.0</text><text x="731" y="706">18.2</text><text x="838" y="706">36.5</text><text x="944" y="706">54.7</text><text x="1046" y="706">72</text><text x="838" y="715" textLength="67" lengthAdjust="spacingAndGlyphs">Distance in km</text></g>
<text transform="translate(605 601) rotate(-90)" font-size="12" class="w m" textLength="94" lengthAdjust="spacingAndGlyphs">km above MSL</text>
<text x="1052" y="428" font-size="12" class="w" textLength="76" lengthAdjust="spacingAndGlyphs">radialvelocity</text>
<g shape-rendering="crispEdges"><rect x="1052" y="436" width="10" height="11" fill="#ff0000"/><rect x="1052" y="447" width="10" height="11" fill="#d80000"/><rect x="1052" y="458" width="10" height="11" fill="#800000"/><rect x="1052" y="469" width="10" height="11" fill="#e05000"/><rect x="1052" y="480" width="10" height="11" fill="#ff7800"/><rect x="1052" y="491" width="10" height="11" fill="#ff6060"/><rect x="1052" y="502" width="10" height="11" fill="#ff9090"/><rect x="1052" y="513" width="10" height="11" fill="#ffc0c0"/><rect x="1052" y="524" width="10" height="11" fill="#ffff00"/><rect x="1052" y="535" width="10" height="11" fill="#ffb820"/><rect x="1052" y="546" width="10" height="11" fill="#d89460"/><rect x="1052" y="557" width="10" height="11" fill="#a85000"/><rect x="1052" y="568" width="10" height="11" fill="#b0b0b0"/><rect x="1052" y="579" width="10" height="11" fill="#085010"/><rect x="1052" y="590" width="10" height="11" fill="#008c10"/><rect x="1052" y="601" width="10" height="11" fill="#10b020"/><rect x="1052" y="612" width="10" height="11" fill="#10ff10"/><rect x="1052" y="623" width="10" height="11" fill="#00c8ff"/><rect x="1052" y="634" width="10" height="11" fill="#0080ff"/><rect x="1052" y="645" width="10" height="11" fill="#0000e0"/><rect x="1052" y="656" width="10" height="11" fill="#0020b0"/><rect x="1052" y="667" width="10" height="11" fill="#000080"/><rect x="1052" y="678" width="10" height="11" fill="#8080b0"/><rect x="1052" y="689" width="10" height="11" fill="#505078"/><rect x="1052" y="700" width="10" height="11" fill="#707070"/></g>
<g font-size="12" class="w"><text x="1067" y="446">24.0</text><text x="1067" y="457">22.0</text><text x="1067" y="468">20.0</text><text x="1067" y="479">18.0</text><text x="1067" y="490">16.0</text><text x="1067" y="501">14.0</text><text x="1067" y="512">12.0</text><text x="1067" y="523">10.0</text><text x="1067" y="534">8.0</text><text x="1067" y="545">6.0</text><text x="1067" y="556">4.0</text><text x="1067" y="567">2.0</text><text x="1067" y="578">0.0</text><text x="1067" y="589">−2.0</text><text x="1067" y="600">−4.0</text><text x="1067" y="611">−6.0</text><text x="1067" y="622">−8.0</text><text x="1067" y="633">−10.0</text><text x="1067" y="644">−12.0</text><text x="1067" y="655">−14.0</text><text x="1067" y="666">−16.0</text><text x="1067" y="677">−18.0</text><text x="1067" y="688">−20.0</text><text x="1067" y="699">−22.0</text><text x="1067" y="710">−24.0</text></g>
<g transform="translate(579 720)">
<rect x=".5" y=".5" width="45" height="47" fill="#191970" stroke="#8c8c8c"/><use href="#zz"/>
<g transform="translate(47 0)" color="#ff0"><rect x=".5" y=".5" width="45" height="47" fill="#191970" stroke="#8c8c8c"/><use href="#cube"/><rect x="13" y="12" width="17" height="24" fill="url(#dy)"/><text x="23" y="9" font-size="7" fill="#ff0" text-anchor="middle">CROSS</text><text x="23" y="45" font-size="7" fill="#ff0" text-anchor="middle">SECTION</text></g>
<g transform="translate(94 0)" color="#ccc"><rect x=".5" y=".5" width="45" height="47" fill="#666" stroke="#8c8c8c"/><use href="#cube"/><rect x="13" y="12" width="17" height="24" fill="url(#dw)"/><text x="23" y="9" font-size="7" fill="#ddd" text-anchor="middle">CROSS</text><text x="23" y="45" font-size="7" fill="#ddd" text-anchor="middle">SECTION</text></g>
<g transform="translate(141 0)" color="#ccc"><rect x=".5" y=".5" width="45" height="47" fill="#666" stroke="#8c8c8c"/><use href="#cube"/><rect x="13" y="12" width="17" height="24" fill="url(#dw)"/><text x="23" y="9" font-size="7" fill="#ddd" text-anchor="middle">CROSS</text><text x="23" y="45" font-size="7" fill="#ddd" text-anchor="middle">SECTION</text></g>
</g>

<!-- ============ table + window chrome ============ -->
<rect x="1121" y="771" width="4" height="102" fill="#5f9ea0"/>
<rect x="573" y="869" width="552" height="4" fill="#5f9ea0"/>
<rect x="1083" y="776" width="36" height="91" fill="#e4e4e4"/>
<rect x="1119" y="776" width="2" height="93" fill="#000"/>
<path class="dot" d="M1083.500 776V869M1083 775.500H1121M1125.500 771V873M573 873.500H1125"/>
<rect x="580" y="772" width="43.500" height="20.500" fill="#000" stroke="#ddd" stroke-width="1.500"/>
<text x="584" y="787" font-size="12" fill="#ddd" textLength="34" lengthAdjust="spacingAndGlyphs">Dismiss</text>
<rect x="574.500" y="796.500" width="502" height="65" fill="none" stroke="#e0e0e0" stroke-width="2"/>
<g font-size="14.500" class="m" fill="#eee" font-weight="bold">
<text x="577.500" y="812" textLength="71">PLATFORM</text><text x="677" y="812" textLength="44">FIELD</text><text x="776" y="812" textLength="71">ALTITUDE</text><text x="911" y="812" textLength="35">TIME</text>
<text x="577.500" y="827" textLength="89">rhb_lowprf</text><text x="677" y="827" textLength="44">maxdz</text><text x="776" y="827" textLength="98">0.50 km MSL</text><text x="911" y="827" textLength="161">19-Aug-97,14:00:26</text>
<text x="577.500" y="842" textLength="53">rhb_3d</text><text x="677" y="842" textLength="44">maxdz</text><text x="776" y="842" textLength="98">0.50 km MSL</text><text x="911" y="842" textLength="161">19-Aug-97,14:01:23</text>
</g>

<!-- bottom control bar -->
<rect x="573" y="874" width="500" height="26" fill="#e4e4e4"/>
<g shape-rendering="crispEdges" fill="#000"><rect x="578" y="873" width="1.500" height="27"/><rect x="719" y="873" width="1.500" height="27"/><rect x="919" y="873" width="1.500" height="27"/><rect x="1017" y="873" width="1.500" height="27"/><rect x="1073" y="873" width="1.500" height="27"/></g>
<rect x="1074.500" y="873" width="3.500" height="27" fill="#5f9ea0"/>
<rect x="726" y="873" width="187" height="24" fill="none" stroke="#000" stroke-width="1.500"/>
<rect x="591.500" y="873" width="60" height="22.500" fill="#e4e4e4" stroke="#f01010"/>
<text x="595" y="890" font-size="14" fill="#000" textLength="52" lengthAdjust="spacingAndGlyphs">Real Time</text>
<rect x="657.500" y="873" width="56.500" height="22.500" fill="#000" stroke="#f01010"/>
<text x="661" y="890" font-size="14" fill="#fff" textLength="48" lengthAdjust="spacingAndGlyphs">Set Time</text>
<text x="733" y="885" font-size="13" font-weight="bold" fill="#000" textLength="24" lengthAdjust="spacingAndGlyphs">Skip</text>
<rect x="765" y="873" width="38" height="18" fill="#e4e4e4" stroke="#ffff00" stroke-width="1.500"/>
<text x="771" y="887" font-size="13" fill="#000">1</text><path d="M773 888L775 886L777 888" stroke="#000" fill="none"/>
<rect x="805.500" y="873.500" width="52" height="20" fill="#f0f0f0" stroke="#000"/>
<path d="M811.500 876.500H819.500V888.500H811.500ZM813 879.500H818M813 882.500H818M813 885.500H818" fill="none" stroke="#000" stroke-width="1.200"/>
<text x="825" y="887" font-size="14" font-weight="bold" fill="#000" textLength="30" lengthAdjust="spacingAndGlyphs" style="font-family:'Liberation Serif',serif">hrs</text>
<rect x="859.500" y="873" width="23" height="20" fill="url(#dk)" stroke="#f01010"/>
<rect x="864" y="875" width="14" height="14" fill="#fff"/><path d="M876 882H866M870 878L866 882L870 886" stroke="#000" stroke-width="2" fill="none"/>
<rect x="885.500" y="873" width="23" height="20" fill="url(#dk)" stroke="#f01010"/>
<rect x="890" y="875" width="14" height="14" fill="#fff"/><path d="M892 882H902M898 878L902 882L898 886" stroke="#000" stroke-width="2" fill="none"/>
<rect x="925" y="873" width="32" height="22.500" fill="#e4e4e4" stroke="#f01010"/>
<text x="929" y="890" font-size="14" fill="#000" textLength="24" lengthAdjust="spacingAndGlyphs">Help</text>
<rect x="962" y="873" width="50" height="22.500" fill="#e4e4e4" stroke="#f01010"/>
<text x="966" y="890" font-size="14" fill="#000" textLength="42" lengthAdjust="spacingAndGlyphs">Dismiss</text>
</svg>
</body></html>
